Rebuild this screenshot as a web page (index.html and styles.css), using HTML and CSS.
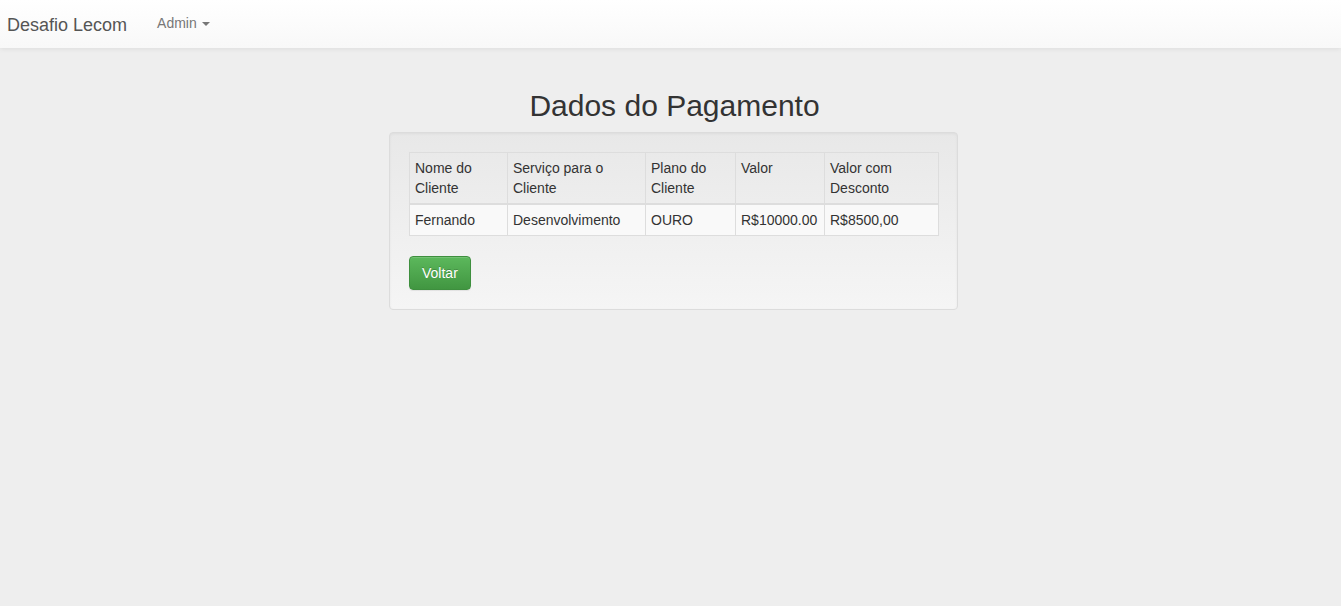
FILE: index.html
```html
<!DOCTYPE html>
<html lang="pt-BR">
<head>
<meta charset="utf-8">
<title>Dados do Pagamento</title>
<link rel="stylesheet" href="styles.css">
</head>
<body>
<nav class="navbar">
  <a class="brand" href="#">Desafio Lecom</a>
  <a class="menu" href="#">Admin <span class="caret"></span></a>
</nav>
<div class="page">
  <main class="main">
    <h2 class="title">Dados do Pagamento</h2>
    <div class="well">
      <table class="table">
        <thead>
          <tr>
            <th class="c1">Nome do Cliente</th>
            <th class="c2">Serviço para o Cliente</th>
            <th class="c3">Plano do Cliente</th>
            <th class="c4">Valor</th>
            <th class="c5">Valor com Desconto</th>
          </tr>
        </thead>
        <tbody>
          <tr>
            <td>Fernando</td>
            <td>Desenvolvimento</td>
            <td>OURO</td>
            <td>R$10000.00</td>
            <td>R$8500,00</td>
          </tr>
        </tbody>
      </table>
      <a class="btn" href="#">Voltar</a>
    </div>
  </main>
</div>
</body>
</html>
```
FILE: styles.css
```css
* { box-sizing: border-box; }
html, body { margin: 0; padding: 0; }
body {
  background: #eeeeee;
  font-family: "Liberation Sans", Arial, Helvetica, sans-serif;
  font-size: 14px;
  line-height: 20px;
  color: #333;
}
a { text-decoration: none; }
.navbar {
  height: 48px;
  display: flex;
  align-items: center;
  background: linear-gradient(to bottom, #ffffff 0%, #f8f8f8 100%);
  box-shadow: inset 0 1px 0 rgba(255,255,255,.15), 0 1px 5px rgba(0,0,0,.075);
  padding-left: 7px;
}
.brand {
  font-size: 18px;
  color: #555;
  line-height: 20px;
  margin-top: 1px;
}
.menu {
  margin-left: 30px;
  color: #777;
  font-size: 14px;
  margin-top: -2px;
  display: flex;
  align-items: center;
}
.caret {
  display: inline-block;
  width: 0;
  height: 0;
  margin-left: 5px;
  margin-top: 1px;
  border-top: 4px solid #777;
  border-left: 4px solid transparent;
  border-right: 4px solid transparent;
}
.page {
  display: flex;
  justify-content: center;
  padding-left: 6px;
}
.main { width: 569px; }
.title {
  margin: 41px 0 10px;
  padding-left: 2px;
  font-size: 30px;
  line-height: 33px;
  font-weight: 500;
  text-align: center;
  color: #333;
}
.well {
  padding: 19px;
  border: 1px solid #dcdcdc;
  border-radius: 4px;
  background: linear-gradient(to bottom, #e8e8e8 0%, #f5f5f5 100%);
  box-shadow: inset 0 1px 3px rgba(0,0,0,.05), 0 1px 0 rgba(255,255,255,.1);
}
.table {
  width: 100%;
  border-collapse: collapse;
  border-spacing: 0;
  margin-bottom: 20px;
  table-layout: fixed;
  border: 1px solid #ddd;
}
.table th, .table td {
  padding: 5px;
  border: 1px solid #ddd;
  text-align: left;
  vertical-align: top;
  font-weight: normal;
  line-height: 20px;
}
.table thead th { border-bottom-width: 2px; }
.table tbody tr { background: #f9f9f9; }
.c1 { width: 98px; }
.c2 { width: 138px; }
.c3 { width: 90px; }
.c4 { width: 89px; }
.c5 { width: 114px; }
.btn {
  display: inline-block;
  padding: 6px 12px;
  font-size: 14px;
  line-height: 20px;
  color: #fff;
  border: 1px solid #3e8f3e;
  border-radius: 4px;
  background: linear-gradient(to bottom, #5cb85c 0%, #419641 100%);
  text-shadow: 0 -1px 0 rgba(0,0,0,.2);
  box-shadow: inset 0 1px 0 rgba(255,255,255,.15), 0 1px 1px rgba(0,0,0,.075);
}
```
